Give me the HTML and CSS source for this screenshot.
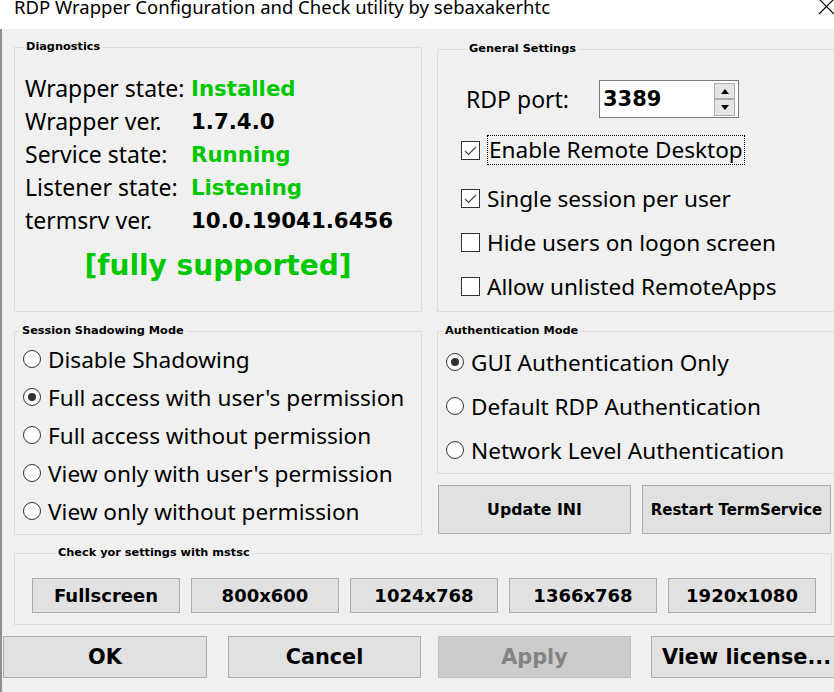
FILE: index.html
```html
<!DOCTYPE html>
<html lang="en">
<head>
    <meta charset="UTF-8" />
    <title>RDP Wrapper Configuration</title>
    <link rel="stylesheet" href="styles.css">
</head>
<body>

<!-- Заголовок окна -->
<div class="titlebar">
    <span class="title">RDP Wrapper Configuration and Check utility by sebaxakerhtc</span>
    <svg class="close" width="17" height="17" viewBox="0 0 17 17">
        <path d="M1 1 L16 16 M16 1 L1 16" stroke="#000" stroke-width="1.1" fill="none"/>
    </svg>
</div>

<div class="window">

    <div class="row-top">
        <!-- Диагностика -->
        <fieldset class="group diag">
            <legend class="leg-diag">Diagnostics</legend>
            <div class="diag-grid">
                <span class="lbl">Wrapper state:</span><span class="val ok">Installed</span>
                <span class="lbl">Wrapper ver.</span><span class="val num">1.7.4.0</span>
                <span class="lbl">Service state:</span><span class="val ok">Running</span>
                <span class="lbl">Listener state:</span><span class="val ok">Listening</span>
                <span class="lbl">termsrv ver.</span><span class="val num">10.0.19041.6456</span>
            </div>
            <div class="support">[fully supported]</div>
        </fieldset>

        <!-- Общие настройки -->
        <fieldset class="group general">
            <legend class="leg-general">General Settings</legend>
            <div class="port-row">
                <span class="port-lbl">RDP port:</span>
                <div class="spin">
                    <span class="spin-val">3389</span>
                    <div class="spin-btns">
                        <span class="spin-btn"><svg width="8" height="5" viewBox="0 0 8 5"><path d="M0 5 L4 0 L8 5 Z" fill="#000"/></svg></span>
                        <span class="spin-btn down"><svg width="8" height="5" viewBox="0 0 8 5"><path d="M0 0 L8 0 L4 5 Z" fill="#000"/></svg></span>
                    </div>
                </div>
            </div>
            <div class="check-row first">
                <span class="box"><svg width="17" height="17" viewBox="0 0 17 17"><path d="M3 9 L6.5 12.5 L14 5" stroke="#444" stroke-width="1.2" fill="none"/></svg></span>
                <span class="focus">Enable Remote Desktop</span>
            </div>
            <div class="check-row">
                <span class="box"><svg width="17" height="17" viewBox="0 0 17 17"><path d="M3 9 L6.5 12.5 L14 5" stroke="#444" stroke-width="1.2" fill="none"/></svg></span>
                <span class="text">Single session per user</span>
            </div>
            <div class="check-row">
                <span class="box"></span>
                <span class="text">Hide users on logon screen</span>
            </div>
            <div class="check-row">
                <span class="box"></span>
                <span class="text">Allow unlisted RemoteApps</span>
            </div>
        </fieldset>
    </div>

    <div class="row-mid">
        <!-- Режим теневого подключения -->
        <fieldset class="group shadow">
            <legend class="leg-shadow">Session Shadowing Mode</legend>
            <div class="radio-row"><span class="radio"></span><span class="text">Disable Shadowing</span></div>
            <div class="radio-row"><span class="radio on"></span><span class="text">Full access with user's permission</span></div>
            <div class="radio-row"><span class="radio"></span><span class="text">Full access without permission</span></div>
            <div class="radio-row"><span class="radio"></span><span class="text">View only with user's permission</span></div>
            <div class="radio-row"><span class="radio"></span><span class="text">View only without permission</span></div>
        </fieldset>

        <div class="right-col">
            <!-- Режим аутентификации -->
            <fieldset class="group auth">
                <legend class="leg-auth">Authentication Mode</legend>
                <div class="radio-row tall"><span class="radio on"></span><span class="text">GUI Authentication Only</span></div>
                <div class="radio-row tall"><span class="radio"></span><span class="text">Default RDP Authentication</span></div>
                <div class="radio-row tall"><span class="radio"></span><span class="text">Network Level Authentication</span></div>
            </fieldset>
            <div class="action-row">
                <button class="btn btn-action btn-update">Update INI</button>
                <button class="btn btn-action btn-restart">Restart TermService</button>
            </div>
        </div>
    </div>

    <!-- Проверка через mstsc -->
    <fieldset class="group check">
        <legend class="leg-check">Check yor settings with mstsc</legend>
        <div class="res-row">
            <button class="btn btn-res">Fullscreen</button>
            <button class="btn btn-res">800x600</button>
            <button class="btn btn-res">1024x768</button>
            <button class="btn btn-res">1366x768</button>
            <button class="btn btn-res">1920x1080</button>
        </div>
    </fieldset>

    <div class="row-bottom">
        <button class="btn btn-main btn-ok">OK</button>
        <button class="btn btn-main btn-cancel">Cancel</button>
        <button class="btn btn-main btn-apply">Apply</button>
        <button class="btn btn-main btn-license">View license...</button>
    </div>

</div>

</body>
</html>
```

FILE: styles.css
```css
/* окно */
body {
    margin: 0;
    padding: 0;
    width: 834px;
    height: 692px;
    overflow: hidden;
    background: #f0f0f0;
    font-family: "Noto Sans", "DejaVu Sans", sans-serif;
    color: #000;
}

.titlebar {
    height: 29px;
    background: #fff;
    display: flex;
    align-items: flex-start;
    overflow: hidden;
}
.title {
    font-size: 18.5px;
    line-height: 19px;
    margin-top: -3px;
    padding-left: 14px;
    white-space: nowrap;
}
.close {
    flex-shrink: 0;
    margin-left: auto;
    margin-right: -1px;
    margin-top: -2px;
}

.window {
    border-left: 2px solid #8f8f8f;
    height: 663px;
    box-sizing: border-box;
    padding-top: 11px;
}

/* рамки групп */
.group {
    border: 1px solid #dcdcdc;
    margin: 0;
    padding: 0;
    min-width: 0;
    box-sizing: border-box;
    flex-shrink: 0;
}
.group legend {
    font-family: "DejaVu Sans", sans-serif;
    font-weight: bold;
    font-size: 11.3px;
    line-height: 14px;
    padding: 0 2px;
    white-space: nowrap;
}
.leg-diag { margin-left: 9px; }
.leg-general { margin-left: 29px; }
.leg-shadow { margin-left: 5px; }
.leg-auth { margin-left: 5px; }
.leg-check { margin-left: 41px; }

.row-top {
    display: flex;
    gap: 15px;
    padding-left: 12px;
}

/* диагностика */
.diag {
    width: 408px;
    height: 272px;
}
.diag-grid {
    display: grid;
    grid-template-columns: 166px auto;
    grid-auto-rows: 33px;
    align-items: center;
    padding-left: 10px;
    margin-top: 18px;
}
.lbl {
    font-size: 23px;
    line-height: 33px;
    white-space: nowrap;
}
.val {
    font-family: "DejaVu Sans", sans-serif;
    font-weight: bold;
    font-size: 21.3px;
    line-height: 33px;
    white-space: nowrap;
}
.ok { color: #00c800; }
.support {
    margin-top: 9px;
    text-align: center;
    font-family: "DejaVu Sans", sans-serif;
    font-weight: bold;
    font-size: 28px;
    line-height: 40px;
    color: #00c800;
}

/* общие настройки */
.general {
    width: 420px;
    height: 270px;
    margin-top: 2px;
}
.port-row {
    display: flex;
    align-items: center;
    height: 38px;
    margin-top: 24px;
    padding-left: 28px;
}
.port-lbl {
    width: 133px;
    font-size: 23px;
}
.spin {
    width: 140px;
    height: 38px;
    box-sizing: border-box;
    border: 1px solid #7a7a7a;
    background: #fff;
    display: flex;
    align-items: flex-start;
}
.spin-val {
    font-family: "DejaVu Sans", sans-serif;
    font-weight: bold;
    font-size: 21px;
    line-height: 36px;
    padding-left: 3px;
}
.spin-btns {
    margin-left: auto;
    margin-right: 3px;
    margin-top: 2px;
    display: flex;
    flex-direction: column;
}
.spin-btn {
    width: 21px;
    height: 16px;
    box-sizing: border-box;
    background: #e5e5e5;
    border: 1px solid #adadad;
    display: flex;
    align-items: center;
    justify-content: center;
}
.spin-btn.down {
    height: 17px;
}

.check-row {
    display: flex;
    align-items: center;
    height: 44px;
    padding-left: 23px;
    font-size: 22.6px;
    white-space: nowrap;
}
.check-row.first {
    margin-top: 10px;
    margin-bottom: 4px;
}
.box {
    flex-shrink: 0;
    width: 19px;
    height: 19px;
    box-sizing: border-box;
    border: 1px solid #333;
    background: #fff;
    margin-right: 7px;
    display: flex;
}
.focus {
    border: 1px dotted #000;
    line-height: 28px;
    padding: 0 1px;
}

/* переключатели */
.row-mid {
    display: flex;
    gap: 15px;
    padding-left: 12px;
    margin-top: 12px;
}
.shadow {
    width: 408px;
    height: 211px;
}
.radio-row {
    display: flex;
    align-items: center;
    height: 38px;
    padding-left: 8px;
    font-size: 22.6px;
    white-space: nowrap;
}
.shadow .radio-row:first-of-type,
.auth .radio-row:first-of-type {
    margin-top: 2px;
}
.radio-row.tall {
    height: 44px;
}
.radio {
    flex-shrink: 0;
    width: 18px;
    height: 18px;
    box-sizing: border-box;
    border: 1px solid #333;
    border-radius: 50%;
    background: #fff;
    margin-right: 7px;
    display: flex;
    align-items: center;
    justify-content: center;
}
.radio.on::after {
    content: "";
    width: 8px;
    height: 8px;
    border-radius: 50%;
    background: #333;
}

.right-col {
    width: 420px;
    flex-shrink: 0;
}
.auth {
    width: 420px;
    height: 150px;
}

/* кнопки */
.btn {
    font-family: "DejaVu Sans", sans-serif;
    font-weight: bold;
    background: #e1e1e1;
    border: 1px solid #adadad;
    color: #000;
    padding: 0;
    box-sizing: border-box;
    white-space: nowrap;
    flex-shrink: 0;
}
.action-row {
    display: flex;
    gap: 11px;
    margin-top: 11px;
    padding-left: 1px;
}
.btn-action {
    height: 49px;
}
.btn-update {
    width: 193px;
    font-size: 15.8px;
}
.btn-restart {
    width: 189px;
    font-size: 15px;
}

.check {
    width: 818px;
    height: 79px;
    margin-left: 12px;
    margin-top: 11px;
}
.res-row {
    display: flex;
    gap: 11px;
    padding-left: 17px;
    margin-top: 18px;
}
.btn-res {
    width: 148px;
    height: 35px;
    font-size: 18px;
}

.row-bottom {
    display: flex;
    margin-top: 11px;
    padding-left: 1px;
}
.btn-main {
    height: 42px;
    font-size: 20.8px;
}
.btn-ok { width: 204px; }
.btn-cancel { width: 193px; margin-left: 21px; }
.btn-apply {
    width: 193px;
    margin-left: 17px;
    background: #cccccc;
    border-color: #bfbfbf;
    color: #838383;
}
.btn-license { width: 200px; margin-left: 20px; text-align: left; padding-left: 10px; }
```
